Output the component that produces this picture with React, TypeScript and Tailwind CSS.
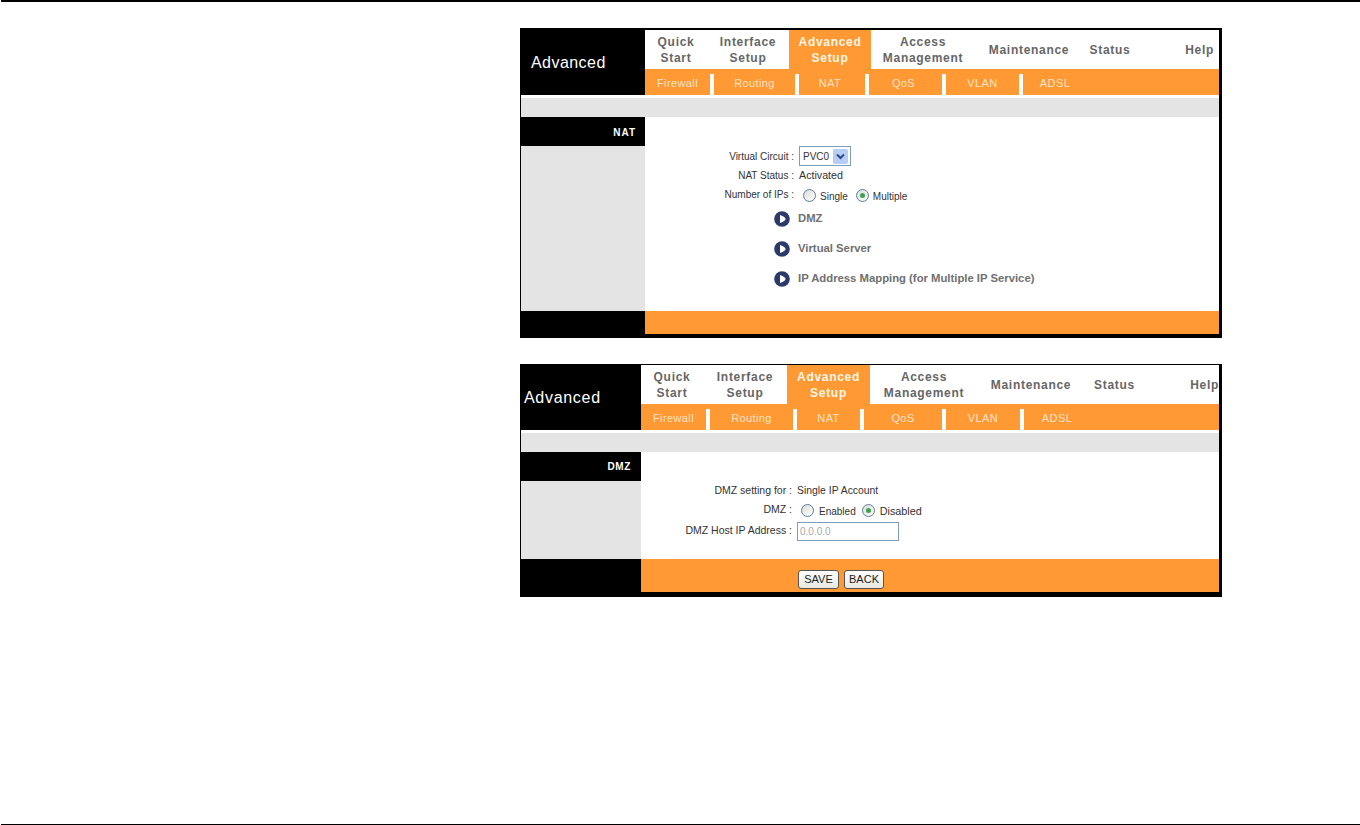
const font = "font-['Liberation_Sans',Arial,sans-serif]"

type Col = { label: string[]; w: string; active?: boolean; right?: string }
type Sub = { label: string; w: string; pad?: string }

function Radio({ checked }: { checked?: boolean }) {
  return (
    <span className="flex h-[13px] w-[13px] shrink-0 items-center justify-center rounded-full border border-[#5c7f9f] bg-gradient-to-br from-[#dcdcd8] to-white">
      {checked && <span className="h-[5px] w-[5px] rounded-full bg-[#3fa34d]" />}
    </span>
  )
}

function Arrow() {
  return (
    <svg width="16" height="16" viewBox="0 0 16 16" className="shrink-0">
      <circle cx="8" cy="8" r="7.8" fill="#2b3a68" />
      <path d="M6 4 Q11.5 6 11.5 8 Q11.5 10 6 12 Z" fill="#ffffff" />
    </svg>
  )
}

function Panel({
  leftW,
  titleCls,
  side,
  sideCls,
  top,
  sub,
  bodyH,
  footH,
  borderCls,
  children,
  footer,
}: {
  leftW: string
  titleCls: string
  side: string
  sideCls: string
  top: Col[]
  sub: Sub[]
  bodyH: string
  footH: string
  borderCls: string
  children: React.ReactNode
  footer?: React.ReactNode
}) {
  return (
    <div className={`ml-[520px] w-[702px] border-r-[3px] border-l border-black bg-white ${borderCls}`}>
      <div className="flex">
        <div className={`flex ${leftW} shrink-0 items-center bg-black text-[16px] text-white ${titleCls}`}>
          Advanced
        </div>
        <div className="min-w-0 flex-1">
          <div className="flex h-[39px]">
            {top.map((c) => (
              <div
                key={c.label.join(' ')}
                className={`flex ${c.w} flex-col justify-center pt-[2px] text-[12px] leading-[15.5px] font-bold tracking-[0.7px] ${c.right ? `${c.right} text-right` : 'text-center'} ${c.active ? 'bg-[#ff9933] text-[#fff6e6]' : 'text-[#666666]'}`}
              >
                {c.label.map((l) => (
                  <span key={l}>{l}</span>
                ))}
              </div>
            ))}
          </div>
          <div className="flex h-[26px] bg-[#ff9933] text-[11px] tracking-[0.4px] text-[#ffe3c4]">
            {sub.map((s) => (
              <div key={s.label} className={`flex ${s.w} items-center justify-center`}>
                <span className={`flex-1 pt-[3px] text-center ${s.pad ?? ''}`}>{s.label}</span>
                {s.label !== 'ADSL' && <span className="mt-[5px] h-[21px] w-[4px] bg-white" />}
              </div>
            ))}
          </div>
        </div>
      </div>
      <div className="mt-[3px] h-[19px] bg-[#e4e4e4]" />
      <div className={`flex ${bodyH}`}>
        <div className={`flex ${leftW} shrink-0 flex-col bg-[#e4e4e4]`}>
          <div className={`flex h-[29px] items-center justify-end bg-black text-[10px] font-bold text-white ${sideCls}`}>{side}</div>
        </div>
        <div className="min-w-0 flex-1">{children}</div>
      </div>
      <div className={`flex ${footH}`}>
        <div className={`${leftW} shrink-0 bg-black`} />
        <div className="flex flex-1 items-end bg-[#ff9933]">{footer}</div>
      </div>
    </div>
  )
}

function Row({
  label,
  w,
  h,
  labelCls,
  children,
}: {
  label: string
  w: string
  h: string
  labelCls: string
  children: React.ReactNode
}) {
  return (
    <div className={`flex ${h} items-center text-[#333333]`}>
      <div className={`${w} shrink-0 pr-[5px] text-right ${labelCls}`}>{label} :</div>
      <div className="flex items-center">{children}</div>
    </div>
  )
}

const topA: Col[] = [
  { label: ['Quick', 'Start'], w: 'w-[62px]' },
  { label: ['Interface', 'Setup'], w: 'w-[82px]' },
  { label: ['Advanced', 'Setup'], w: 'w-[82px]', active: true },
  { label: ['Access', 'Management'], w: 'w-[104px]' },
  { label: ['Maintenance'], w: 'w-[108px]' },
  { label: ['Status'], w: 'w-[54px]' },
  { label: ['Help'], w: 'flex-1', right: 'pr-[5px]' },
]

const subA: Sub[] = [
  { label: 'Firewall', w: 'w-[69px]' },
  { label: 'Routing', w: 'w-[85px]' },
  { label: 'NAT', w: 'w-[70px]', pad: 'pr-[4px]' },
  { label: 'QoS', w: 'w-[77px]', pad: 'pr-[4px]' },
  { label: 'VLAN', w: 'w-[77px]' },
  { label: 'ADSL', w: 'w-[62px]', pad: 'pl-[2px]' },
]

const topB: Col[] = [
  { label: ['Quick', 'Start'], w: 'w-[62px]' },
  { label: ['Interface', 'Setup'], w: 'w-[84px]' },
  { label: ['Advanced', 'Setup'], w: 'w-[83px]', active: true },
  { label: ['Access', 'Management'], w: 'w-[108px]' },
  { label: ['Maintenance'], w: 'w-[106px]' },
  { label: ['Status'], w: 'w-[61px]' },
  { label: ['Help'], w: 'flex-1', right: 'pr-[0px]' },
]

const subB: Sub[] = [
  { label: 'Firewall', w: 'w-[69px]' },
  { label: 'Routing', w: 'w-[87px]' },
  { label: 'NAT', w: 'w-[67px]' },
  { label: 'QoS', w: 'w-[82px]' },
  { label: 'VLAN', w: 'w-[78px]' },
  { label: 'ADSL', w: 'w-[66px]' },
]

function NatBody() {
  return (
    <div className="pt-[29px]">
      <Row label="Virtual Circuit" w="w-[154px]" h="h-[20px]" labelCls="text-[10px]">
        <div className="flex h-[20px] w-[52px] items-center justify-between border border-[#7f9db9] bg-white pr-[2px] pl-[3px] text-[10px]">
          <span>PVC0</span>
          <span className="flex h-[15px] w-[15px] items-center justify-center rounded-[2px] bg-[#b8cdf3]">
            <svg width="9" height="7" viewBox="0 0 9 7">
              <path d="M1 1.5 L4.5 5 L8 1.5" fill="none" stroke="#2a4a8a" strokeWidth="2" />
            </svg>
          </span>
        </div>
      </Row>
      <Row label="NAT Status" w="w-[154px]" h="h-[19px]" labelCls="text-[10px]">
        <span className="text-[10.7px]">Activated</span>
      </Row>
      <Row label="Number of IPs" w="w-[154px]" h="h-[20px]" labelCls="pb-[2px] text-[10px]">
        <span className="ml-[4px]">
          <Radio />
        </span>
        <span className="mr-[8px] ml-[4px] pt-[2px] text-[10px]">Single</span>
        <Radio checked />
        <span className="ml-[4px] pt-[2px] text-[10px]">Multiple</span>
      </Row>
      <div className="mt-[6px] flex flex-col gap-[14px] pl-[129px] text-[11.3px] font-bold text-[#707070]">
        {['DMZ', 'Virtual Server', 'IP Address Mapping (for Multiple IP Service)'].map((t) => (
          <div key={t} className="flex h-[16px] items-center gap-[8px]">
            <Arrow />
            <span className="pb-[1px]">{t}</span>
          </div>
        ))}
      </div>
    </div>
  )
}

function DmzBody() {
  return (
    <div className="pt-[29px]">
      <Row label="DMZ setting for" w="w-[156px]" h="h-[20px]" labelCls="text-[10.5px]">
        <span className="text-[10.4px]">Single IP Account</span>
      </Row>
      <Row label="DMZ" w="w-[156px]" h="h-[20px]" labelCls="pb-[2px] text-[10.5px]">
        <span className="ml-[4px] pb-[2px]">
          <Radio />
        </span>
        <span className="mr-[6px] ml-[5px] pt-[1px] text-[10px]">Enabled</span>
        <span className="pb-[2px]">
          <Radio checked />
        </span>
        <span className="ml-[5px] pt-[1px] text-[10.8px]">Disabled</span>
      </Row>
      <Row label="DMZ Host IP Address" w="w-[156px]" h="h-[20px]" labelCls="text-[10.5px]">
        <div className="flex h-[19px] w-[102px] items-center border border-[#7f9db9] bg-white pl-[2px] text-[10px] text-[#a8a8a8]">0.0.0.0</div>
      </Row>
    </div>
  )
}

function Btn({ label, w }: { label: string; w: string }) {
  return (
    <button className={`h-[19px] ${w} rounded-[3px] border border-[#555555] bg-gradient-to-b from-white to-[#e8e8e0] text-[11px] text-[#222222]`}>
      {label}
    </button>
  )
}

export default function App() {
  return (
    <div className={`flex h-[825px] flex-col justify-between bg-white ${font}`}>
      <div>
        <div className="ml-[1px] h-[2px] bg-black" />
        <div className="pt-[26px]">
          <Panel
            leftW="w-[124px]"
            titleCls="pl-[10px] tracking-[0.45px]"
            side="NAT"
            sideCls="pt-[1px] pr-[9px] tracking-[1px]"
            top={topA}
            sub={subA}
            bodyH="h-[194px]"
            footH="h-[23px]"
            borderCls="border-t-2 border-b-4"
          >
            <NatBody />
          </Panel>
        </div>
        <div className="pt-[26px]">
          <Panel
            leftW="w-[120px]"
            titleCls="pl-[3px] tracking-[0.7px]"
            side="DMZ"
            sideCls="pr-[10px] tracking-[0.6px]"
            top={topB}
            sub={subB}
            bodyH="h-[107px]"
            footH="h-[33px]"
            borderCls="border-t border-b-[5px]"
            footer={
              <div className="flex gap-[5px] pb-[3px] pl-[157px]">
                <Btn label="SAVE" w="w-[41px]" />
                <Btn label="BACK" w="w-[40px]" />
              </div>
            }
          >
            <DmzBody />
          </Panel>
        </div>
      </div>
      <div className="ml-[1px] h-[1px] bg-black" />
    </div>
  )
}
